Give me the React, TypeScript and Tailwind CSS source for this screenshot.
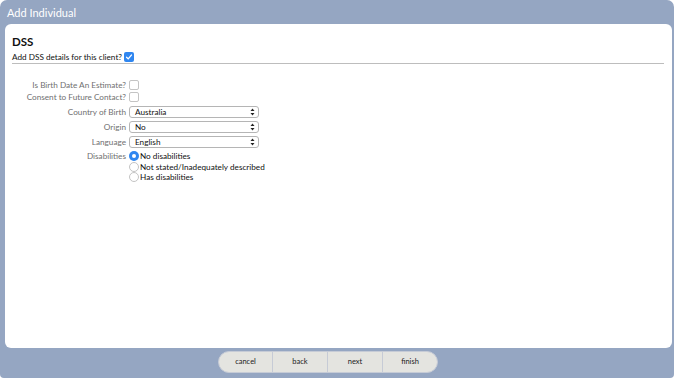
import React from "react";

function Arrows() {
  return (
    <svg width="5" height="8" viewBox="0 0 5 8" className="mr-[3px]">
      <path d="M2.5 0.5 L4.5 3 L0.5 3 Z" fill="#222" />
      <path d="M2.5 7.5 L4.5 5 L0.5 5 Z" fill="#222" />
    </svg>
  );
}

function Select({ value }: { value: string }) {
  return (
    <div className="w-[130px] h-[12px] bg-white border border-[#b5b5b5] rounded-[3px] flex items-center justify-between pl-[5px] text-[8.2px] text-[#111] leading-none">
      <span>{value}</span>
      <Arrows />
    </div>
  );
}

function Box() {
  return <div className="w-[10px] h-[10px] border border-[#c4c4c4] rounded-[2px] bg-white" />;
}

function Radio({ checked }: { checked?: boolean }) {
  return checked ? (
    <div className="w-[10px] h-[10px] rounded-full bg-[#2f86f0] flex items-center justify-center">
      <div className="w-[4px] h-[4px] rounded-full bg-white" />
    </div>
  ) : (
    <div className="w-[10px] h-[10px] rounded-full border border-[#c4c4c4] bg-white" />
  );
}

function Row({ label, children }: { label: string; children: React.ReactNode }) {
  return (
    <div className="flex items-center">
      <div className="w-[124px] text-right pr-[3px] text-[8.2px] text-[#707070] leading-none">{label}</div>
      {children}
    </div>
  );
}

export default function App() {
  return (
    <div className="w-[676px] h-[381px] bg-white" style={{ fontFamily: "Lato, 'Noto Sans', sans-serif" }}>
      <div className="w-[674px] h-[378px] bg-[#95a6c2] rounded-t-[7px] rounded-b-[4px] flex flex-col">
        <div className="h-[24px] flex items-center pl-[7px] pt-[2px] text-white text-[11px]">Add Individual</div>
        <div className="ml-[5px] mr-[2px] h-[324px] bg-white rounded-[6px] pt-[12px] pl-[7px] pr-[8px]">
          <div className="text-[11.5px] font-bold text-[#111] leading-none h-[14px]">DSS</div>
          <div className="flex items-center gap-[2px] text-[8.2px] text-[#111] leading-none mt-[2px] pb-[1px] border-b border-[#bdbdbd]">
            <span>Add DSS details for this client?</span>
            <div className="w-[10px] h-[10px] rounded-[2px] bg-[#2f86f0] flex items-center justify-center">
              <svg width="8" height="8" viewBox="0 0 8 8">
                <path d="M1.5 4.2 L3.2 5.8 L6.5 2" stroke="white" strokeWidth="1.2" fill="none" strokeLinecap="round" />
              </svg>
            </div>
          </div>
          <div className="-ml-[7px] mt-[16px] flex flex-col gap-[2px]">
            <Row label="Is Birth Date An Estimate?"><Box /></Row>
            <Row label="Consent to Future Contact?"><Box /></Row>
            <div className="flex flex-col gap-[3px] mt-[2px]">
              <Row label="Country of Birth"><Select value="Australia" /></Row>
              <Row label="Origin"><Select value="No" /></Row>
              <Row label="Language"><Select value="English" /></Row>
            </div>
            <div className="flex items-start mt-[1px]">
              <div className="w-[124px] text-right pr-[3px] text-[8.2px] text-[#707070] leading-[10px]">Disabilities</div>
              <div className="flex flex-col gap-[0.5px] text-[8.2px] text-[#111] leading-[10px]">
                <div className="flex items-center gap-[1px]"><Radio checked /><span>No disabilities</span></div>
                <div className="flex items-center gap-[1px]"><Radio /><span>Not stated/Inadequately described</span></div>
                <div className="flex items-center gap-[1px]"><Radio /><span>Has disabilities</span></div>
              </div>
            </div>
          </div>
        </div>
        <div className="flex justify-center pt-[3px]">
          <div className="ml-[-18px] flex h-[22px] rounded-full overflow-hidden border border-[#c6cbd6] bg-[#e4e4e0] text-[7.5px] text-[#222]">
            <div className="w-[54px] flex items-center justify-center border-r border-[#c6cbd6]">cancel</div>
            <div className="w-[55px] flex items-center justify-center border-r border-[#c6cbd6]">back</div>
            <div className="w-[55px] flex items-center justify-center border-r border-[#c6cbd6]">next</div>
            <div className="w-[54px] flex items-center justify-center">finish</div>
          </div>
        </div>
      </div>
    </div>
  );
}
